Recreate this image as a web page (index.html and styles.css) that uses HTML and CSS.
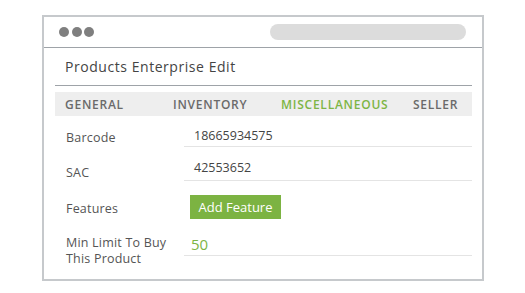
FILE: index.html
```html
<!DOCTYPE html>
<html>
<head>
<meta charset="utf-8">
<link rel="stylesheet" href="styles.css">
</head>
<body>
<div class="window">
  <div class="titlebar">
    <div class="dots"><span class="dot"></span><span class="dot"></span><span class="dot"></span></div>
    <div class="pill"></div>
  </div>
  <div class="content">
    <div class="heading">Products Enterprise Edit</div>
    <div class="tabs">
      <div class="tab">GENERAL</div>
      <div class="tab">INVENTORY</div>
      <div class="tab active">MISCELLANEOUS</div>
      <div class="tab">SELLER</div>
    </div>
    <div class="field f1">
      <div class="label">Barcode</div>
      <div class="value">18665934575</div>
    </div>
    <div class="field f2">
      <div class="label">SAC</div>
      <div class="value">42553652</div>
    </div>
    <div class="field f3">
      <div class="label">Features</div>
      <div class="btnwrap"><span class="btn">Add Feature</span></div>
    </div>
    <div class="field f4">
      <div class="label">Min Limit To Buy<br>This Product</div>
      <div class="value num">50</div>
    </div>
  </div>
</div>
</body>
</html>
```
FILE: styles.css
```css
html, body { margin: 0; padding: 0; background: #ffffff; }
body { font-family: "Open Sans", "Liberation Sans", sans-serif; color: #555; }

.window {
  margin: 15px 0 0 42px;
  width: 438px;
  height: 262px;
  border: 2px solid #c6c9cc;
  background: #fff;
}

.titlebar {
  height: 30px;
  border-bottom: 1px solid #9ea3a8;
  display: flex;
  align-items: center;
  justify-content: space-between;
  padding: 0 16px 0 15px;
}
.dots { display: flex; gap: 2.5px; }
.dot { width: 10px; height: 10px; border-radius: 50%; background: #7f7f7f; }
.pill { width: 196px; height: 16px; border-radius: 8px; background: #dcdcdc; }

.content { padding: 0 10px 0 11px; }

.heading {
  height: 38px;
  box-sizing: border-box;
  padding-top: 10px;
  padding-left: 10px;
  font-size: 14px;
  line-height: 18px;
  letter-spacing: 0.55px;
  color: #444;
  border-bottom: 1px solid #9ea3a8;
}

.tabs {
  margin-top: 6px;
  height: 24px;
  background: #eeeeee;
  display: grid;
  grid-template-columns: 108px 108px 132px auto;
  padding-left: 10px;
  align-items: center;
}
.tab { font-size: 12px; font-weight: 600; color: #6a6a6a; letter-spacing: 0.75px; }
.tab.active { color: #7db544; }

.field {
  display: grid;
  grid-template-columns: 129px 288px;
}
.label { padding-left: 11px; font-size: 12.5px; line-height: 16px; color: #555; letter-spacing: 0.2px; }
.value {
  padding-left: 10px;
  font-size: 12.5px;
  line-height: 16px;
  color: #444;
  border-bottom: 1px solid #e4e4e4;
  box-sizing: border-box;
}

.f1 { height: 31px; }
.f1 .label { padding-top: 14px; }
.f1 .value { padding-top: 12px; }

.f2 { height: 34px; }
.f2 .label { padding-top: 18px; }
.f2 .value { padding-top: 13px; }

.f3 { height: 38px; }
.f3 .label { padding-top: 20px; }
.btnwrap { padding: 14px 0 0 6px; }
.btn {
  display: inline-block;
  width: 91px;
  height: 24px;
  line-height: 24px;
  text-align: center;
  background: #7cb342;
  color: #fff;
  font-size: 13px;
}

.f4 .label { padding-top: 16px; }
.f4 .value { height: 37px; padding-top: 17px; padding-left: 7px; }
.num { font-size: 15px; color: #7db544; }
```
